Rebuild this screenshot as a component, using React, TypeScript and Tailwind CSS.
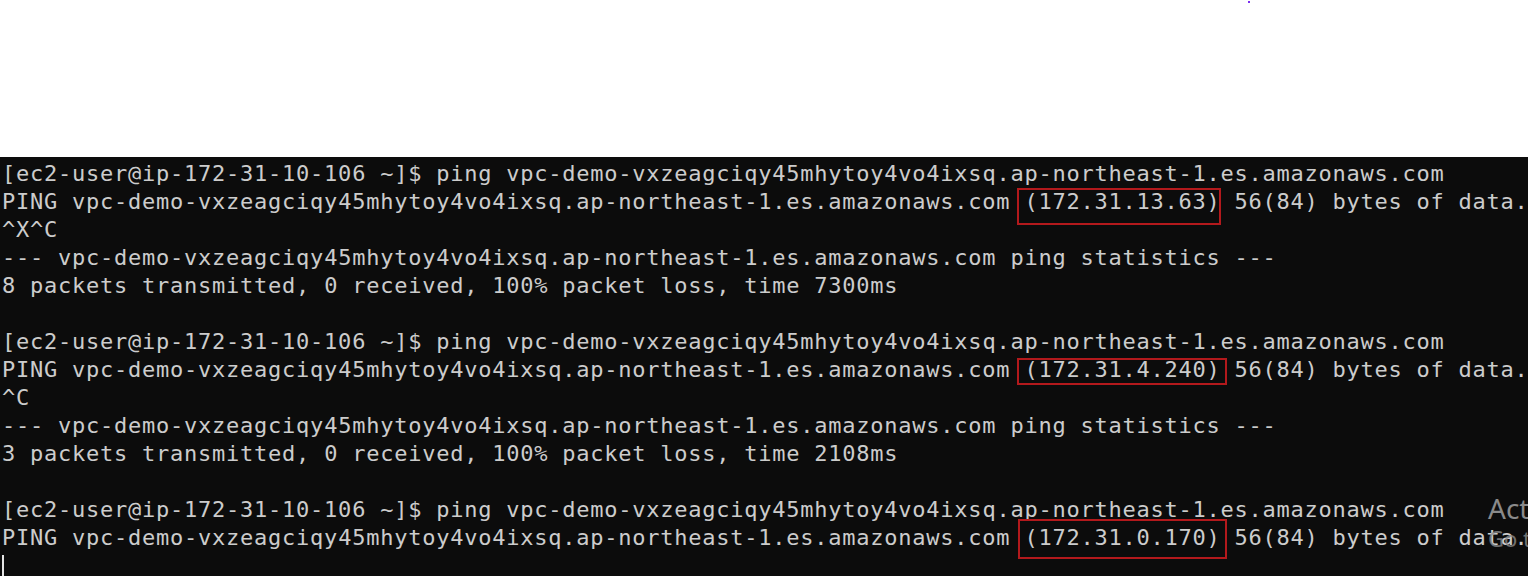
import React from 'react';

const HOST = 'vpc-demo-vxzeagciqy45mhytoy4vo4ixsq.ap-northeast-1.es.amazonaws.com';
const PROMPT = '[ec2-user@ip-172-31-10-106 ~]$ ';

function Line({ children }: { children?: React.ReactNode }) {
	return <div className="h-[28px] leading-[28px] whitespace-pre">{children}</div>;
}

function Boxed({ ip, box }: { ip: string; box: string }) {
	return (
		<span className="relative">
			{ip}
			<span className={`absolute border-2 border-[#b3191c] pointer-events-none ${box}`} />
		</span>
	);
}

function PingRun({ ip, box, ctrl, sent, time }: { ip: string; box: string; ctrl: string; sent: number; time: string }) {
	return (
		<>
			<Line>{PROMPT}ping {HOST}</Line>
			<Line>
				PING {HOST} <Boxed ip={ip} box={box} /> 56(84) bytes of data.
			</Line>
			<Line>{ctrl}</Line>
			<Line>--- {HOST} ping statistics ---</Line>
			<Line>
				{sent} packets transmitted, 0 received, 100% packet loss, time {time}
			</Line>
			<Line />
		</>
	);
}

export default function App() {
	return (
		<div className="w-[1528px] h-[576px] flex flex-col overflow-hidden bg-white">
			<div className="h-[157px] shrink-0 bg-white relative">
				<div className="absolute left-[1248px] top-[1px] w-[2px] h-[2px] bg-[#7c2ff0]" />
			</div>

			<div className="flex-1 relative overflow-hidden bg-[#0c0c0c] text-[#cccccc] pl-[2px] font-['DejaVu_Sans_Mono',monospace] text-[22px] tracking-[0.76px]">
				<div className="mt-[-25px]">
					<Line>{'[ p   g   y        qj p  g y     p ]'}</Line>
				</div>
				<PingRun ip="(172.31.13.63)" box="left-[-7px] right-[-1px] top-[-1px] bottom-[-11px]" ctrl="^X^C" sent={8} time="7300ms" />
				<PingRun ip="(172.31.4.240)" box="left-[-7px] right-[-7px] top-[1px] bottom-[-3px]" ctrl="^C" sent={3} time="2108ms" />
				<Line>{PROMPT}ping {HOST}</Line>
				<Line>
					PING {HOST} <Boxed ip="(172.31.0.170)" box="left-[-6px] right-[-7px] top-[-6px] bottom-[-9px]" /> 56(84) bytes of data.
				</Line>
				<div className="h-[28px] flex items-end">
					<div className="w-[2px] h-[25px] bg-[#e5e5e5] ml-[0px]" />
				</div>

				<div className="absolute left-[1488px] top-[335px] whitespace-nowrap text-[#8a8a8a] font-['Noto_Sans',sans-serif] tracking-normal pointer-events-none">
					<div className="text-[28px] leading-[32px]">Activate Windows</div>
					<div className="text-[22px] leading-[28px] opacity-80">Go to Settings to activate Windows.</div>
				</div>
			</div>
		</div>
	);
}
